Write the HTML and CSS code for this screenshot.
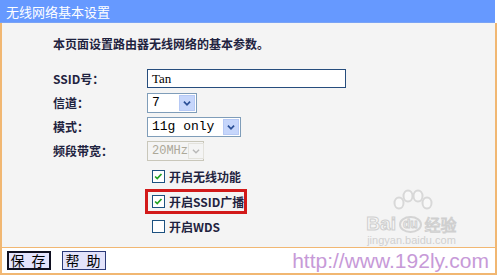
FILE: index.html
```html
<!DOCTYPE html>
<html lang="zh">
<head>
<meta charset="utf-8">
<link rel="stylesheet" href="styles.css">
</head>
<body>
<div class="panel">
  <div class="title">无线网络基本设置</div>
  <div class="content">
    <p class="desc">本页面设置路由器无线网络的基本参数。</p>
    <div class="form">
      <div class="label">SSID号：</div>
      <div class="field"><div class="input ssid">Tan</div></div>
      <div class="label">信道：</div>
      <div class="field"><div class="select ch"><span class="val">7</span><span class="arrow"><svg viewBox="0 0 16 16" width="16" height="16"><path d="M4.5 6.5 L8 10 L11.5 6.5" fill="none" stroke="#2a4f96" stroke-width="2"/></svg></span></div></div>
      <div class="label">模式：</div>
      <div class="field"><div class="select mode"><span class="val">11g only</span><span class="arrow"><svg viewBox="0 0 16 16" width="16" height="16"><path d="M4.5 6.5 L8 10 L11.5 6.5" fill="none" stroke="#2a4f96" stroke-width="2"/></svg></span></div></div>
      <div class="label">频段带宽：</div>
      <div class="field"><div class="select bw disabled"><span class="val">20MHz</span><span class="arrow"><svg viewBox="0 0 16 16" width="16" height="16"><path d="M4.5 6.5 L8 10 L11.5 6.5" fill="none" stroke="#b8b8b8" stroke-width="1.6"/></svg></span></div></div>
    </div>
    <div class="checks">
      <div class="check"><span class="box"><svg viewBox="0 0 13 13" width="11" height="11"><path d="M2.5 6.5 L5 9 L10 3.5" fill="none" stroke="#21a121" stroke-width="2"/></svg></span><span>开启无线功能</span></div>
      <div class="check hl"><span class="box"><svg viewBox="0 0 13 13" width="11" height="11"><path d="M2.5 6.5 L5 9 L10 3.5" fill="none" stroke="#21a121" stroke-width="2"/></svg></span><span>开启SSID广播</span></div>
      <div class="check"><span class="box"></span><span>开启WDS</span></div>
    </div>
    <div class="watermark">
      <svg class="paw" viewBox="0 0 60 26" width="60" height="26">
        <g fill="#f8f8f8" stroke="#d8d8d8" stroke-width="2">
          <ellipse cx="17" cy="14" rx="4.5" ry="5.5"/>
          <ellipse cx="26" cy="7" rx="4.5" ry="5.5"/>
          <ellipse cx="36" cy="7" rx="4.5" ry="5.5"/>
          <ellipse cx="45" cy="14" rx="4.5" ry="5.5"/>
        </g>
      </svg>
      <div class="bd"><span class="bai">Bai</span><span class="du">du</span><span class="jy">经验</span></div>
      <div class="jurl">jingyan.baidu.com</div>
    </div>
  </div>
  <div class="footer">
    <button class="btn focus">保 存</button>
    <button class="btn">帮 助</button>
    <span class="site">http://www.192ly.com</span>
  </div>
</div>
</body>
</html>
```
FILE: styles.css
```css
html, body {
  margin: 0;
  padding: 0;
  background: #ffffff;
}
body {
  font-family: "Noto Sans CJK SC", "DejaVu Sans", sans-serif;
  font-size: 12px;
  color: #000;
}
.panel {
  width: 497px;
  height: 275px;
  display: flex;
  flex-direction: column;
}
.title {
  height: 23px;
  width: 495px;
  background: #6699ff;
  border-bottom: 1px solid #7aa3f5;
  color: #fff;
  font-size: 13px;
  line-height: 23px;
  padding-left: 6px;
  box-sizing: border-box;
}
.content {
  position: relative;
  height: 224px;
  background: #f4f4f4;
  border-left: 2px solid #f1b772;
  border-right: 2px solid #f1b772;
  box-sizing: border-box;
  padding-left: 51px;
  padding-top: 13px;
}
.desc {
  margin: 0;
  line-height: 16px;
  font-weight: bold;
  color: #1f2340;
  font-size: 12px;
}
.form {
  margin-top: 17px;
  display: grid;
  grid-template-columns: 94px auto;
  grid-auto-rows: 24px;
  align-items: start;
}
.label {
  line-height: 19px;
  font-weight: bold;
  color: #1f2340;
}
.field { display: flex; }
.input {
  height: 19px;
  box-sizing: border-box;
  border: 1px solid #264d7d;
  background: #fff;
  font-family: "Liberation Serif", serif;
  font-size: 13px;
  line-height: 17px;
  padding-left: 4px;
}
.ssid { width: 199px; }
.select {
  height: 20px;
  box-sizing: border-box;
  border: 1px solid #7f9db9;
  background: #fff;
  display: flex;
  justify-content: space-between;
  align-items: center;
  padding: 1px;
  font-family: "Liberation Mono", monospace;
  font-size: 13px;
}
.select .val { padding-left: 3px; line-height: 16px; }
.select .arrow {
  width: 16px;
  height: 16px;
  background: #c6d6fb;
  border: 1px solid #b6c9f5;
  box-sizing: border-box;
  display: flex;
  align-items: center;
  justify-content: center;
}
.select .arrow svg { width: 14px; height: 14px; }
.ch { width: 50px; }
.mode { width: 94px; }
.bw { width: 57px; }
.select.disabled {
  border-color: #c9c7ba;
  background: #f4f4f4;
  color: #aca899;
  font-size: 12px;
}
.select.disabled .arrow {
  background: #f4f4f4;
  border-color: #e3e2dc;
}
.checks {
  margin-top: -1px;
  padding-left: 99px;
  display: flex;
  flex-direction: column;
}
.check {
  height: 25px;
  display: flex;
  align-items: center;
  gap: 4px;
  color: #1f2340;
  font-weight: bold;
  position: relative;
}
.check .box {
  width: 13px;
  height: 13px;
  box-sizing: border-box;
  border: 1px solid #1c5180;
  background: #fff;
  display: flex;
  align-items: center;
  justify-content: center;
}
.check.hl::after {
  content: "";
  position: absolute;
  left: -7px;
  top: 0;
  width: 102px;
  height: 25px;
  box-sizing: border-box;
  border: 3px solid #d21a1a;
}
.watermark {
  position: absolute;
  left: 352px;
  top: 166px;
  width: 115px;
  color: #dcdcdc;
  text-align: center;
}
.paw { display: block; margin: 0 auto; }
.bd {
  font-family: "Liberation Sans", sans-serif;
  font-size: 19px;
  font-weight: bold;
  line-height: 18px;
  height: 18px;
  color: #f6f6f6;
  -webkit-text-stroke: 1px #cfcfcf;
  display: flex;
  justify-content: center;
  align-items: center;
}
.bd .du {
  display: inline-block;
  font-size: 12px;
  border: 2px solid #d4d4d4;
  border-radius: 50%;
  padding: 0 2px;
  line-height: 13px;
  margin: 0 3px;
}
.bd .jy { font-size: 16px; font-family: "Noto Sans CJK SC", sans-serif; font-weight: normal; }
.jurl {
  font-family: "Liberation Sans", sans-serif;
  font-size: 11px;
  line-height: 10px;
  margin-top: 2px;
  color: #d0d0d0;
}
.footer {
  flex: 1;
  border: 2px solid #f1b772;
  border-top-width: 1px;
  box-sizing: border-box;
  width: 497px;
  background: #fff;
  display: flex;
  align-items: center;
  padding-left: 5px;
  gap: 11px;
  position: relative;
}
.btn {
  height: 19px;
  width: 44px;
  padding: 0;
  font-family: "Noto Sans CJK SC", sans-serif;
  font-size: 14px;
  line-height: 15px;
  letter-spacing: 2px;
  background: #e3e3fb;
  border: 1px solid #2c3a78;
  color: #000;
}
.btn.focus { border: 2px solid #101020; }
.site {
  margin-left: auto;
  margin-right: 6px;
  font-family: "Liberation Sans", sans-serif;
  font-size: 21px;
  color: #c79ad8;
  line-height: 22px;
}
```
